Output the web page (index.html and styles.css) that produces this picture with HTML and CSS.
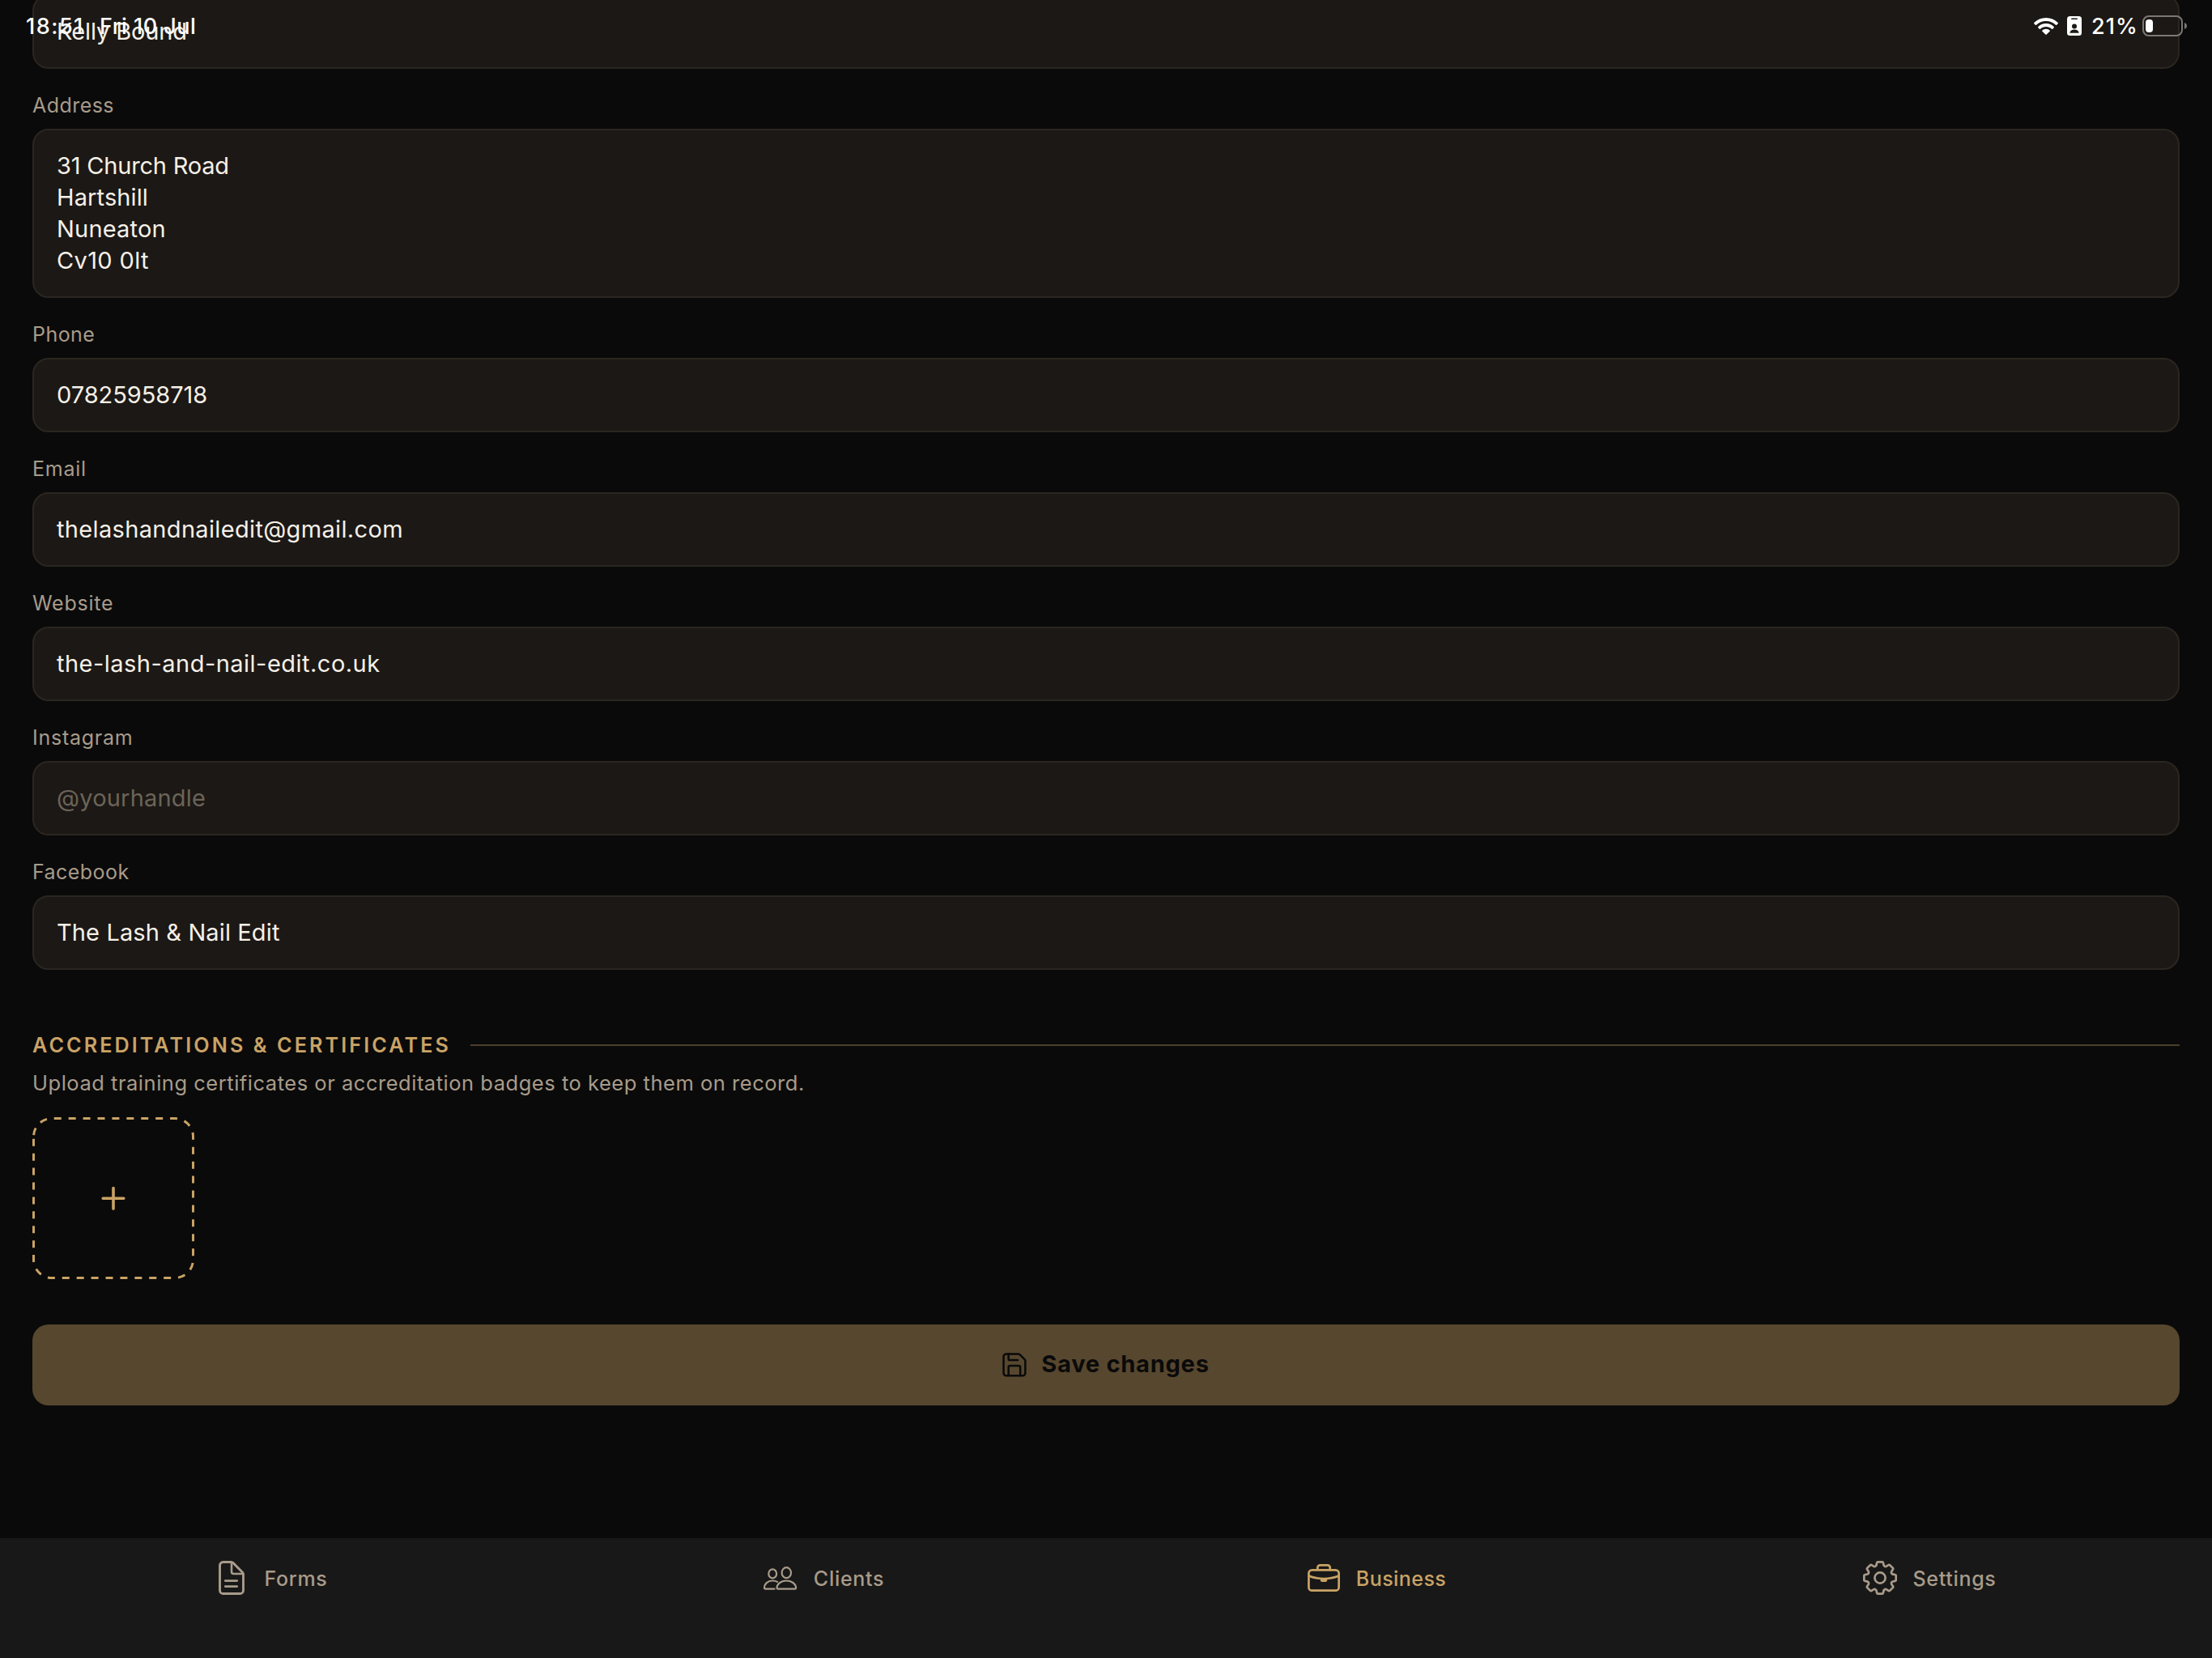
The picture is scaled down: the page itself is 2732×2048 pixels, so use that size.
FILE: index.html
```html
<!DOCTYPE html>
<html lang="en">
<head>
<meta charset="utf-8">
<title>Business</title>
<link rel="stylesheet" href="styles.css">
</head>
<body>
<div class="app">
  <header class="status">
    <div class="status-left"><span class="time">18:51</span><span class="date">Fri 10 Jul</span></div>
    <div class="status-right">
      <svg class="wifi" width="30" height="21" viewBox="0 0 30 21" fill="#fff"><path d="M15 0C9.300 0 4.100 2.200.300 5.900c-.4.400-.4.900 0 1.300l1.500 1.500c.4.400.9.400 1.300 0C6.200 5.800 10.400 4 15 4s8.800 1.800 11.900 4.700c.4.400.9.400 1.300 0l1.500-1.500c.4-.4.400-.9 0-1.300C25.900 2.200 20.700 0 15 0z"/><path d="M15 7c-3.800 0-7.200 1.500-9.700 3.900-.4.400-.4.900 0 1.300l1.500 1.500c.4.400.9.400 1.300 0C9.900 12 12.300 11 15 11s5.100 1 6.900 2.700c.4.400.9.400 1.300 0l1.500-1.500c.4-.4.400-.9 0-1.300C22.200 8.500 18.800 7 15 7z"/><path d="M15 13.700c-1.800 0-3.400.7-4.600 1.800-.4.400-.4.900 0 1.300l3.900 3.800c.4.400 1 .4 1.400 0l3.900-3.800c.4-.4.400-.9 0-1.300-1.200-1.100-2.800-1.800-4.600-1.800z"/></svg>
      <svg class="badge" width="18" height="24" viewBox="0 0 18 24"><rect width="18" height="24" rx="3.500" fill="#fff"/><rect x="5" y="2.400" width="8" height="1.700" rx=".8" fill="#1c1815"/><circle cx="9" cy="12.500" r="3" fill="#1c1815"/><path d="M3.300 20.800c.5-2.800 2.800-4.200 5.700-4.200s5.200 1.400 5.700 4.200z" fill="#1c1815"/></svg>
      <span class="percent">21%</span>
      <svg class="battery" width="56" height="26" viewBox="0 0 56 26"><rect x="1" y="1" width="48" height="24" rx="7" fill="none" stroke="#7b7876" stroke-width="2"/><rect x="4" y="5" width="9" height="16" rx="4" fill="#fff"/><path d="M52 9c1.900.7 3 2.200 3 4s-1.100 3.300-3 4z" fill="#7b7876"/></svg>
    </div>
  </header>

  <main class="form">
    <div class="input first t-kelly">Kelly Bound</div>
    <label class="label">Address</label>
    <div class="input area"><span class="t-road">31 Church Road</span><br><span class="t-town">Hartshill</span><br><span class="t-city">Nuneaton</span><br><span class="t-code">Cv10 0lt</span></div>
    <label class="label">Phone</label>
    <div class="input t-phone">07825958718</div>
    <label class="label wide">Email</label>
    <div class="input t-email">thelashandnailedit@gmail.com</div>
    <label class="label wide">Website</label>
    <div class="input t-web">the-lash-and-nail-edit.co.uk</div>
    <label class="label wide">Instagram</label>
    <div class="input placeholder">@yourhandle</div>
    <label class="label">Facebook</label>
    <div class="input t-facebook">The Lash &amp; Nail Edit</div>

    <div class="section"><h2 class="section-title">ACCREDITATIONS &amp; CERTIFICATES</h2><span class="rule"></span></div>
    <p class="hint">Upload training certificates or accreditation badges to keep them on record.</p>
    <button class="add" aria-label="Add certificate">
      <svg width="200" height="200" viewBox="0 0 200 200" fill="none" stroke="#c9a365"><path d="M1.500 24A22.500 22.500 0 0 1 24 1.500H176A22.500 22.500 0 0 1 198.500 24V176A22.500 22.500 0 0 1 176 198.500H24A22.500 22.500 0 0 1 1.500 176Z" stroke-width="3" stroke-dasharray="9 8.920" stroke-dashoffset="-2"/><path d="M100 87.500v25.600M87.200 100.300h25.600" stroke-width="3.600" stroke-linecap="round"/></svg>
    </button>
    <button class="save">
      <svg width="30" height="30" viewBox="0 0 30 30" fill="none" stroke="#0a0a0a" stroke-width="2.500" stroke-linejoin="round" stroke-linecap="round"><path d="M4.800 1.400H19.600a2.500 2.500 0 0 1 1.800.7l6.100 6.100a2.500 2.500 0 0 1 .8 1.800V25a3.300 3.300 0 0 1-3.300 3.300H4.800A3.300 3.300 0 0 1 1.500 25V4.700A3.300 3.300 0 0 1 4.800 1.400z"/><path d="M7.600 1.600V7.400a1.600 1.600 0 0 0 1.600 1.600H19M7.600 28V17.700a1.600 1.600 0 0 1 1.600-1.600H20.500a1.600 1.600 0 0 1 1.600 1.600V28"/></svg>
      <span>Save changes</span>
    </button>
  </main>

  <nav class="tabs">
    <a class="tab tab-forms">
      <svg width="32" height="42" viewBox="0 0 32 42" fill="none" stroke="currentColor" stroke-width="2.900" stroke-linecap="round" stroke-linejoin="round"><path d="M5.500 1.500H15.500c1 0 1.800.4 2.500 1.100L29.300 14c.8.800 1.200 1.500 1.200 2.600V36.500a4 4 0 0 1-4 4H5.500a4 4 0 0 1-4-4V5.500a4 4 0 0 1 4-4z"/><path d="M16 2V13.500A2.500 2.500 0 0 0 18.500 16H30M8.200 24.600H22.800M8.200 31.600H22.800" stroke-width="2.600"/></svg>
      <span>Forms</span>
    </a>
    <a class="tab tab-clients">
      <svg width="42" height="30" viewBox="0 0 42 30" fill="none" stroke="currentColor" stroke-width="2.200" stroke-linecap="round" stroke-linejoin="round"><ellipse cx="11.200" cy="9.900" rx="4.900" ry="5.500"/><ellipse cx="28.300" cy="8.700" rx="5.700" ry="6.500"/><path d="M13.500 28.700H2.200C1.400 28.700 1 28.300 1 27.500 1 22.500 5.200 18.500 11.200 18.500c2.200 0 4.200.5 5.800 1.400"/><path d="M17.800 28.700H38.800c.9 0 1.300-.4 1.300-1.200C40.100 22.900 35.500 18.500 28.300 18.500S16.500 22.900 16.500 27.500c0 .8.400 1.200 1.300 1.200z"/></svg>
      <span>Clients</span>
    </a>
    <a class="tab tab-business active">
      <svg width="40" height="34" viewBox="0 0 40 34" fill="none" stroke="currentColor" stroke-width="2.700" stroke-linejoin="round" stroke-linecap="round"><rect x="1.400" y="7.300" width="37.200" height="25.400" rx="4"/><path d="M12.300 7V4.300a3 3 0 0 1 3-3h9.400a3 3 0 0 1 3 3V7M2 14.800c10.500 4.300 25.500 4.300 36 0"/><path d="M16.500 18.500h7v1.200c0 1-.5 1.600-1.500 1.600h-4c-1 0-1.500-.6-1.500-1.600z" fill="currentColor" stroke-width="1.500"/></svg>
      <span>Business</span>
    </a>
    <a class="tab tab-settings">
      <svg width="42" height="42" viewBox="-21 -21 42 42" fill="none" stroke="currentColor" stroke-width="2.700" stroke-linejoin="round" stroke-linecap="round"><path id="teeth" d="M-4.500-15.800L-3.900-18.600Q-3.700-19.700-2.600-19.700H2.600Q3.700-19.700 3.900-18.600L4.500-15.800C4.900-14.200 6.600-13.500 8-14.350L10.400-15.900Q11.300-16.550 12.100-15.800L15.800-12.100Q16.500-11.300 15.900-10.400L14.350-8C13.500-6.600 14.200-4.900 15.800-4.500"/><use href="#teeth" transform="rotate(90)"/><use href="#teeth" transform="rotate(180)"/><use href="#teeth" transform="rotate(270)"/><circle r="6.600"/></svg>
      <span>Settings</span>
    </a>
  </nav>
</div>
</body>
</html>
```
FILE: styles.css
```css
* { box-sizing: border-box; }
body { margin: 0; background: #0a0a0a; font-family: Inter, "Liberation Sans", sans-serif; }
.app { position: relative; height: 2048px; overflow: hidden; display: flex; flex-direction: column; }

/* Status bar floats over the scrolled form */
.status {
  position: absolute; top: 0; left: 0; right: 0; z-index: 2; height: 64px;
  padding: 0 30px 0 32px; display: flex; justify-content: space-between; align-items: center;
  color: #fff; font-size: 27px; font-weight: 500; line-height: 64px;
}
.status-left, .status-right { display: flex; align-items: center; }
.time, .date, .percent { padding-top: 1px; }
.time { width: 91px; letter-spacing: 1.500px; }
.date { letter-spacing: .5px; }
.wifi { margin-right: 11px; }
.badge { margin-right: 12px; }
.percent { width: 63px; letter-spacing: 1.100px; }
.battery { display: block; }

.form { flex: 1; padding: 0 40px; display: flex; flex-direction: column; }
.input {
  height: 92px; flex: none; padding: 0 28px; border: 2px solid #2b2620; border-radius: 20px;
  background: #1c1815; color: #f5f0e8; font-size: 29px; line-height: 88px; white-space: nowrap;
}
.first { margin-top: -7px; }
.area { height: 209px; padding-top: 24px; line-height: 39px; }
.label {
  display: block; height: 74px; flex: none; padding-top: 30px; color: #a89b8a;
  font-size: 25px; font-weight: 400; line-height: 30px; letter-spacing: .45px;
}
.wide { letter-spacing: .75px; }
.placeholder { color: #6b6459; letter-spacing: .2px; }
.t-kelly { letter-spacing: -.12px; }
.t-road { letter-spacing: -.2px; }
.t-town { letter-spacing: .12px; }
.t-city { letter-spacing: .2px; }
.t-code { letter-spacing: .36px; }
.t-phone { letter-spacing: -.05px; }
.t-email { letter-spacing: .34px; }
.t-web { letter-spacing: .48px; }
.t-facebook { letter-spacing: .12px; }

.section { height: 32px; flex: none; margin-top: 77px; display: flex; align-items: center; gap: 24px; }
.section-title { margin: 0; color: #c9a365; font-size: 25.200px; font-weight: 600; line-height: 32px; letter-spacing: 3.080px; }
.rule { flex: 1; height: 2px; background: #4b3f2b; }
.hint { margin: 15px 0 0; flex: none; height: 32px; color: #a89b8a; font-size: 25.500px; line-height: 32px; letter-spacing: .52px; }
.add { width: 200px; height: 200px; flex: none; margin: 26px 0 0; padding: 0; border: 0; background: none; }
.add svg { display: block; }
.save {
  height: 100px; flex: none; margin-top: 56px; padding: 0; border: 0; border-radius: 20px; background: #57472e;
  display: flex; align-items: center; justify-content: center; gap: 18px;
  color: #0a0a0a; font-family: inherit; font-size: 29px; font-weight: 700; line-height: 36px; letter-spacing: .76px;
}
.save span { padding-bottom: 2px; }

.tabs { height: 148px; flex: none; background: #181818; display: grid; grid-template-columns: repeat(4, 1fr); color: #a89b8a; }
.tab { height: 98px; padding-right: 14px; display: flex; align-items: center; justify-content: center; font-size: 25px; font-weight: 500; letter-spacing: .7px; }
.tab span { padding-top: 2px; }
.tab-forms { padding-right: 8px; gap: 24px; }
.tab-clients { gap: 20px; }
.tab-business { gap: 20px; letter-spacing: .44px; }
.tab-settings { gap: 19px; }
.active { color: #c9a365; }
```
